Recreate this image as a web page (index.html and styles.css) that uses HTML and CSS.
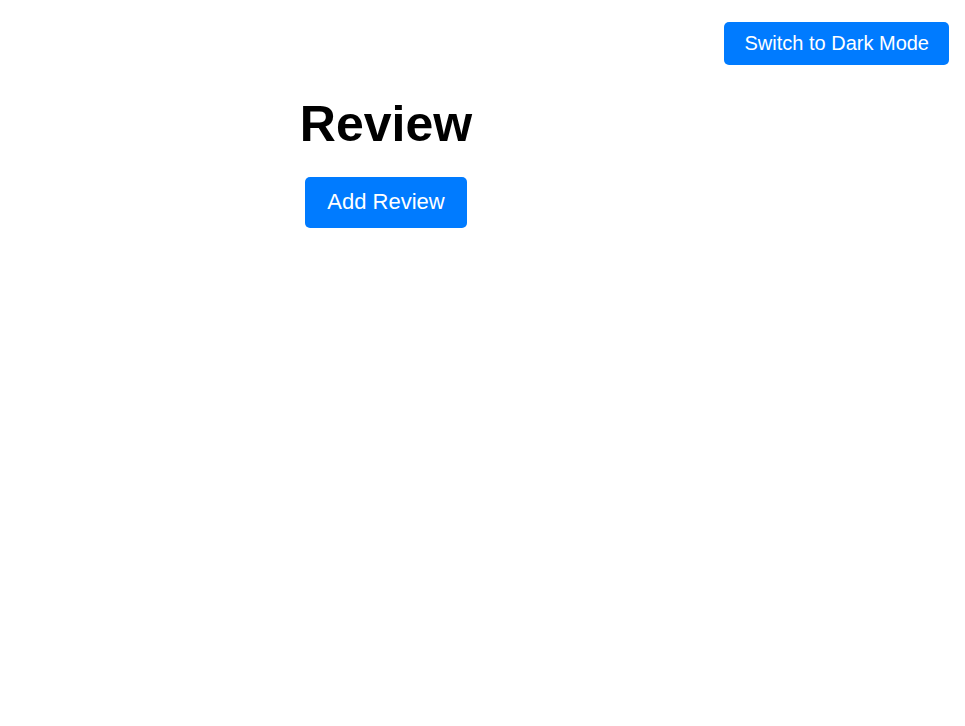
FILE: index.html
```html
<!DOCTYPE html>
<html lang="en">
<head>
<meta charset="utf-8">
<title>Review</title>
<link rel="stylesheet" href="styles.css">
</head>
<body>
<header class="topbar">
  <button class="btn btn-theme" type="button">Switch to Dark Mode</button>
</header>
<main class="content">
  <h1 class="title">Review</h1>
  <button class="btn btn-add" type="button">Add Review</button>
</main>
</body>
</html>
```
FILE: styles.css
```css
html, body {
  margin: 0;
  padding: 0;
  background: #ffffff;
  color: #000000;
  font-family: "Liberation Sans", Arial, sans-serif;
}

.topbar {
  display: flex;
  justify-content: flex-end;
  padding: 22px 16px 0 16px;
}

.btn {
  font-family: "Liberation Sans", Arial, sans-serif;
  background: #007bff;
  color: #ffffff;
  border: none;
  border-radius: 5px;
  cursor: pointer;
  line-height: normal;
}

.btn-theme {
  font-size: 20px;
  padding: 10px 20px;
}

.content {
  width: 80%;
  display: flex;
  flex-direction: column;
  align-items: center;
}

.title {
  font-size: 50px;
  font-weight: bold;
  margin: 30px 0 24px 0;
  line-height: normal;
}

.btn-add {
  font-size: 22px;
  padding: 12px 22px 13px 22px;
}
```
